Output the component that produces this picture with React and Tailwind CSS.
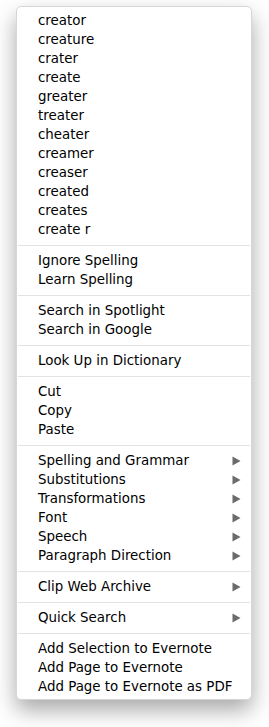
const groups = [
	[
		{ label: "creator" },
		{ label: "creature" },
		{ label: "crater" },
		{ label: "create" },
		{ label: "greater" },
		{ label: "treater" },
		{ label: "cheater" },
		{ label: "creamer" },
		{ label: "creaser" },
		{ label: "created" },
		{ label: "creates" },
		{ label: "create r" },
	],
	[{ label: "Ignore Spelling" }, { label: "Learn Spelling" }],
	[{ label: "Search in Spotlight" }, { label: "Search in Google" }],
	[{ label: "Look Up in Dictionary" }],
	[{ label: "Cut" }, { label: "Copy" }, { label: "Paste" }],
	[
		{ label: "Spelling and Grammar", sub: true },
		{ label: "Substitutions", sub: true },
		{ label: "Transformations", sub: true },
		{ label: "Font", sub: true },
		{ label: "Speech", sub: true },
		{ label: "Paragraph Direction", sub: true },
	],
	[{ label: "Clip Web Archive", sub: true }],
	[{ label: "Quick Search", sub: true }],
	[
		{ label: "Add Selection to Evernote" },
		{ label: "Add Page to Evernote" },
		{ label: "Add Page to Evernote as PDF" },
	],
];

const Arrow = () => (
	<svg width="9" height="10" viewBox="0 0 9 10" className="shrink-0">
		<path d="M0.5 0.5 L8.5 5 L0.5 9.5 Z" fill="#6b6b6b" />
	</svg>
);

const MenuItem = ({ item }) => (
	<div className="flex h-[19px] items-center justify-between pl-[21px] pr-[10px] text-[13.4px] leading-none text-black">
		<span>{item.label}</span>
		{item.sub && <Arrow />}
	</div>
);

const Separator = () => (
	<div className="flex h-3 items-center px-px">
		<div className="h-px w-full bg-[#e3e3e3]" />
	</div>
);

export default function App() {
	return (
		<div className="min-h-[727px] bg-white pl-4 pt-[6px]" style={{ fontFamily: '"DejaVu Sans", "Liberation Sans", sans-serif' }}>
			<div className="w-[236px] rounded-[5px] border border-[#d6d6d6] bg-white pt-[4px] pb-[3px] shadow-[0_10px_22px_rgba(0,0,0,0.35)]">
				{groups.map((group, gi) => (
					<div key={gi}>
						{gi > 0 && <Separator />}
						{group.map((item) => (
							<MenuItem key={item.label} item={item} />
						))}
					</div>
				))}
			</div>
		</div>
	);
}
